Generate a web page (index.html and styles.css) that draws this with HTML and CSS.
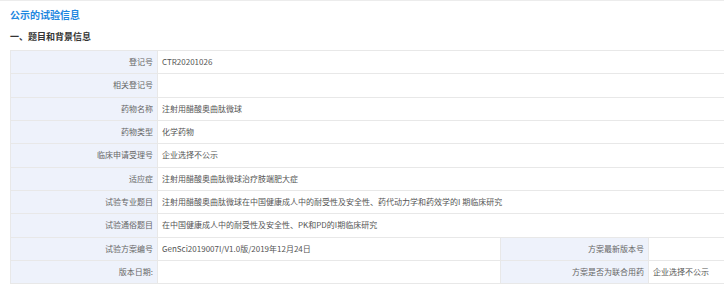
FILE: index.html
```html
<!DOCTYPE html>
<html lang="zh-CN">
<head>
<meta charset="utf-8">
<title>公示的试验信息</title>
<link rel="stylesheet" href="styles.css">
</head>
<body>
<div class="page">
  <h1 class="title">公示的试验信息</h1>
  <h2 class="section">一、题目和背景信息</h2>
  <table class="info">
    <colgroup>
      <col class="c1"><col class="c2"><col class="c3"><col class="c4">
    </colgroup>
    <tr><th>登记号</th><td colspan="3">CTR20201026</td></tr>
    <tr><th>相关登记号</th><td colspan="3"></td></tr>
    <tr><th>药物名称</th><td colspan="3">注射用醋酸奥曲肽微球</td></tr>
    <tr><th>药物类型</th><td colspan="3">化学药物</td></tr>
    <tr><th>临床申请受理号</th><td colspan="3">企业选择不公示</td></tr>
    <tr><th>适应症</th><td colspan="3">注射用醋酸奥曲肽微球治疗肢端肥大症</td></tr>
    <tr><th>试验专业题目</th><td colspan="3">注射用醋酸奥曲肽微球在中国健康成人中的耐受性及安全性、药代动力学和药效学的I 期临床研究</td></tr>
    <tr><th>试验通俗题目</th><td colspan="3">在中国健康成人中的耐受性及安全性、PK和PD的I期临床研究</td></tr>
    <tr><th>试验方案编号</th><td>GenSci2019007I/V1.0版/2019年12月24日</td><th>方案最新版本号</th><td></td></tr>
    <tr><th>版本日期:</th><td></td><th>方案是否为联合用药</th><td>企业选择不公示</td></tr>
  </table>
</div>
</body>
</html>
```
FILE: styles.css
```css
html, body {
  margin: 0;
  padding: 0;
  background: #fff;
}
body {
  font-family: "Noto Sans CJK SC", "Microsoft YaHei", sans-serif;
}
.page {
  border-top: 1px solid #ececec;
  padding-left: 10px;
}
.title {
  margin: 0;
  padding-top: 8px;
  font-size: 10px;
  line-height: 12px;
  font-weight: bold;
  color: #1e87e0;
}
.section {
  margin: 10px 0 0 0;
  font-size: 9px;
  line-height: 12px;
  font-weight: bold;
  color: #333;
}
.info {
  margin-top: 7px;
  width: 714px;
  border-collapse: collapse;
  table-layout: fixed;
  font-size: 8px;
}
.c1 { width: 147px; }
.c2 { width: 343px; }
.c3 { width: 148px; }
.c4 { width: 76px; }
.info tr { height: 23.33px; }
.info th, .info td {
  border: 1px solid #e8e8e8;
  padding: 0 4px;
  line-height: 10px;
  white-space: nowrap;
  overflow: hidden;
}
.info th {
  background: #eef2fb;
  text-align: right;
  font-weight: normal;
  color: #666;
}
.info td {
  text-align: left;
  color: #555;
}
```
